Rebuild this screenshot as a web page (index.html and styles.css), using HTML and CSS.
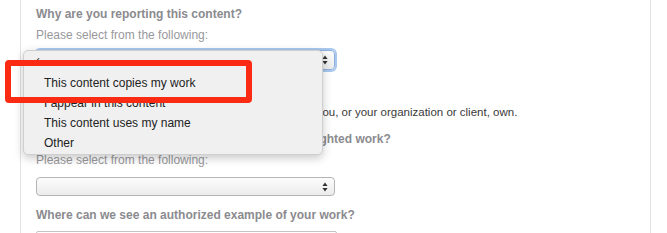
FILE: index.html
```html
<!DOCTYPE html>
<html>
<head>
<meta charset="utf-8">
<link rel="stylesheet" href="styles.css">
</head>
<body>
<div class="card">
  <div class="label l1">Why are you reporting this content?</div>
  <div class="hint h1">Please select from the following:</div>
  <div class="select focus">
    <svg class="arrows" width="6" height="10" viewBox="0 0 6 10"><path d="M3 0.5 L5.6 4 H0.4 Z M3 9.5 L5.6 6 H0.4 Z" fill="#333"/></svg>
  </div>
  <div class="note">Please report only content that infringes the works that you, or your organization or client, own.</div>
  <div class="label l2">What best describes the exact type of your copyrighted work?</div>
  <div class="hint h2">Please select from the following:</div>
  <div class="select small">
    <svg class="arrows" width="6" height="10" viewBox="0 0 6 10"><path d="M3 0.5 L5.6 4 H0.4 Z M3 9.5 L5.6 6 H0.4 Z" fill="#333"/></svg>
  </div>
  <div class="label l3">Where can we see an authorized example of your work?</div>
  <div class="input"></div>
</div>

<div class="menu">
  <div class="item checked"><span class="check">✓</span></div>
  <div class="item">This content copies my work</div>
  <div class="item">I appear in this content</div>
  <div class="item">This content uses my name</div>
  <div class="item">Other</div>
</div>
<div class="highlight"></div>
</body>
</html>
```

FILE: styles.css
```css
html, body {
  margin: 0;
  padding: 0;
  background: #fff;
  font-family: "Liberation Sans", Arial, Helvetica, sans-serif;
  overflow: hidden;
}
body {
  width: 667px;
  height: 233px;
  position: relative;
}
.card {
  margin-left: 20px;
  width: 599px;
  height: 233px;
  border-left: 1px solid #e2e2e2;
  border-right: 1px solid #e2e2e2;
  padding: 0 15px;
  overflow: hidden;
}
.label {
  font-size: 12px;
  font-weight: bold;
  color: #8b8b8f;
  line-height: 20px;
  white-space: nowrap;
}
.hint {
  font-size: 12px;
  color: #98989c;
  line-height: 20px;
  white-space: nowrap;
}
.l1 { padding-top: 4px; }
.h1 { margin-top: 1px; }
.select {
  margin-top: 5px;
  width: 299px;
  height: 20px;
  box-sizing: border-box;
  border: 1px solid #b4b4b4;
  border-radius: 4px;
  background: linear-gradient(#fcfcfc, #ececec);
  position: relative;
}
.select.focus {
  box-shadow: 0 0 0 2px #a9c8ee;
  border-color: #8fb0dc;
}
.select.small {
  margin-top: 7px;
  height: 19px;
}
.arrows {
  position: absolute;
  right: 6px;
  top: 50%;
  margin-top: -5px;
}
.note {
  margin-top: 33px;
  font-size: 11.5px;
  line-height: 18px;
  color: #3a3a3a;
  white-space: nowrap;
}
.l2 { margin-top: 8px; }
.h2 { margin-top: 1px; }
.l3 { margin-top: 9px; }
.input {
  margin-top: 6px;
  width: 299px;
  height: 20px;
  border: 1px solid #c4c4c4;
  border-radius: 2px;
}
.menu {
  position: absolute;
  left: 23px;
  top: 50px;
  width: 300px;
  height: 105px;
  box-sizing: border-box;
  padding-top: 2px;
  background: #f0f0f0;
  border: 1px solid #cfcfcf;
  border-radius: 5px;
  box-shadow: 0 3px 10px rgba(0, 0, 0, 0.22);
}
.item {
  height: 20px;
  line-height: 20px;
  padding-left: 20px;
  font-size: 12px;
  color: #222;
  position: relative;
}
.check {
  position: absolute;
  left: 8px;
  top: -2px;
  font-size: 11px;
  color: #222;
}
.highlight {
  position: absolute;
  left: 5px;
  top: 60px;
  width: 247px;
  height: 43px;
  box-sizing: border-box;
  border: 6px solid #fb2a12;
  border-radius: 4px;
}
```
